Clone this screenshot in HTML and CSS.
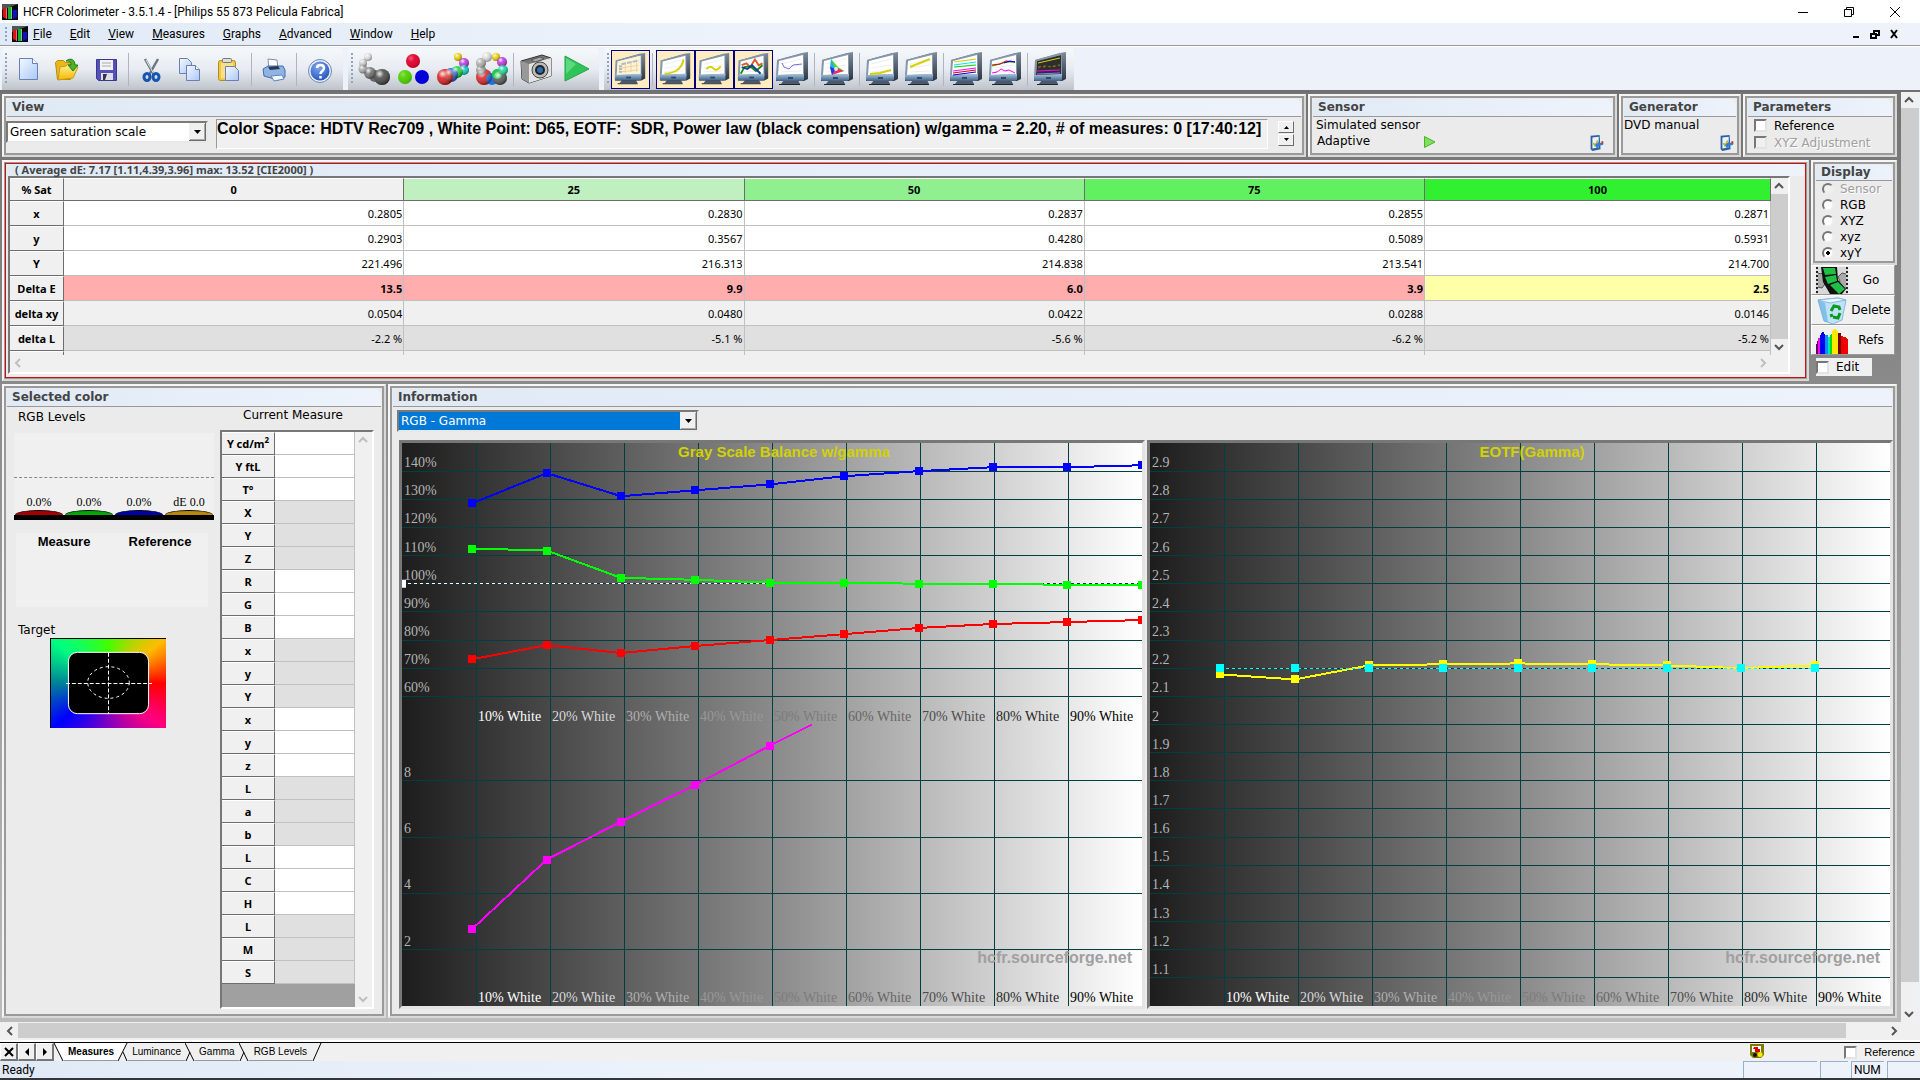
FILE: index.html
```html
<!doctype html>
<html lang="en">

<head>
  <meta charset="utf-8">
  <title>HCFR Colorimeter - 3.5.1.4 - [Philips 55 873 Pelicula Fabrica]</title>
  <link rel="stylesheet" href="styles.css">
</head>

<body>
  <!-- shared icon shapes -->
  <svg class="defs" aria-hidden="true">
    <defs>
      <linearGradient id="g-blue" x1="0" y1="0" x2="1" y2="1">
        <stop offset="0" stop-color="#f4f8ff" />
        <stop offset="1" stop-color="#a9c8f8" />
      </linearGradient>
      <linearGradient id="g-bezel" x1="0" y1="0" x2="0" y2="1">
        <stop offset="0" stop-color="#a9c3dc" />
        <stop offset="1" stop-color="#3f6288" />
      </linearGradient>
      <linearGradient id="g-side" x1="0" y1="0" x2="0" y2="1">
        <stop offset="0" stop-color="#7f8c9b" />
        <stop offset="1" stop-color="#2a3440" />
      </linearGradient>
      <linearGradient id="g-fold" x1="0" y1="0" x2="0" y2="1">
        <stop offset="0" stop-color="#fff49a" />
        <stop offset="1" stop-color="#f5b800" />
      </linearGradient>
      <radialGradient id="g-help" cx=".4" cy=".3" r=".8">
        <stop offset="0" stop-color="#7ea8ee" />
        <stop offset="1" stop-color="#1d4cb8" />
      </radialGradient>
      <radialGradient id="g-shine" cx=".35" cy=".3" r=".7">
        <stop offset="0" stop-color="#fff" stop-opacity=".9" />
        <stop offset=".4" stop-color="#fff" stop-opacity=".15" />
        <stop offset="1" stop-color="#000" stop-opacity=".35" />
      </radialGradient>
      <symbol id="logo" viewBox="0 0 16 16">
        <rect width="16" height="16" fill="#0a0a0a" />
        <path d="M0 0h16L0 6z" fill="#555" />
        <path d="M1 4h4v11l-4-2z" fill="#e01010" />
        <path d="M6 3h4v12H6z" fill="#10b030" />
        <path d="M11 6h4v7l-4 2z" fill="#1010d0" />
        <path d="M4 4h1v11H4zM9 3h1v12H9z" fill="#fff" opacity=".4" />
      </symbol>
      <symbol id="monitor" viewBox="0 0 39 39">
        <path d="M11 30h14l2 4H8z" fill="#4d5968" />
        <path d="M6 34h21v1H6z" fill="#20262e" />
        <path d="M4 10l25-7 6-1v27l-4 2H3l1-6z" fill="url(#g-side)" />
        <path d="M4 10l26-7 1 1v22H3z" fill="#8497ab" />
        <path d="M6 11l24-6v19L5 25z" fill="#fff" />
        <path d="M3 25l28-1v6l-2 1H4l-1-1z" fill="url(#g-bezel)" />
        <path d="M15 27h5v2h-5z" fill="#2f4b6b" />
        <path d="M8 14l20-5M8 18l20-3M8 22l20-1" stroke="#eee" fill="none" />
      </symbol>
      <symbol id="tool" viewBox="0 0 18 20">
        <path d="M3 2l10-1 1 16-9 2-2-2z" fill="#2d5f9c" />
        <path d="M5 4l7-1v12l-7 1z" fill="#eaf4ff" />
        <path d="M6 10l2 3 3-6" stroke="#c4b33a" stroke-width="2" fill="none" />
        <path d="M8 12l4-3 2 1 3-1v3l-4 1-3 3z" fill="#2d80d8" />
        <path d="M15 8h2v3h-2z" fill="#c23b2e" />
      </symbol>
      <symbol id="drop" viewBox="0 0 17 18">
        <path d="M0 0h17v18H0z" fill="#f0f0f0" />
        <path d="M0 18h17V0h-1v17H0z" fill="#6d6d6d" />
        <path d="M1 16h14V1h1v16H1z" fill="#a8a8a8" />
        <path d="M5 7h7l-3.500 4z" fill="#000" />
      </symbol>
    </defs>
  </svg>

  <header class="titlebar">
    <svg class="logo"><use href="#logo" /></svg>
    <span>HCFR Colorimeter - 3.5.1.4 - [Philips 55 873 Pelicula Fabrica]</span>
    <div class="winbtns">
      <button aria-label="Minimize"><svg viewBox="0 0 12 12"><path d="M1 6.500h10" /></svg></button>
      <button aria-label="Restore"><svg viewBox="0 0 12 12"><path d="M1.500 3.500h7v7h-7zM3.500 3V1.500h7v7H9" /></svg></button>
      <button aria-label="Close"><svg viewBox="0 0 12 12"><path d="M1 1l10 10M11 1L1 11" /></svg></button>
    </div>
  </header>

  <nav class="menubar">
    <i class="grip"></i>
    <svg class="logo"><use href="#logo" /></svg>
    <a href="#"><u>F</u>ile</a>
    <a href="#"><u>E</u>dit</a>
    <a href="#"><u>V</u>iew</a>
    <a href="#"><u>M</u>easures</a>
    <a href="#"><u>G</u>raphs</a>
    <a href="#"><u>A</u>dvanced</a>
    <a href="#"><u>W</u>indow</a>
    <a href="#"><u>H</u>elp</a>
    <div class="winbtns docbtns">
      <button aria-label="Minimize document"><svg viewBox="0 0 10 10"><path d="M2 8h6" /></svg></button>
      <button aria-label="Restore document"><svg viewBox="0 0 10 10"><path d="M1 5h5v4H1zM4 4V2h5v4H7" /></svg></button>
      <button aria-label="Close document"><svg viewBox="0 0 10 10"><path d="M2 1l6 8M8 1L2 9" /></svg></button>
    </div>
  </nav>

  <div class="toolbar">
    <div class="group">
      <i class="grip"></i>
      <button aria-label="New"><svg viewBox="0 0 39 39"><path d="M10.500 8.500h13l5 5v16h-18z" fill="url(#g-blue)" stroke="#6a7fb5" /><path d="M23.500 8.500v5h5" fill="#fff" stroke="#6a7fb5" /></svg></button>
      <button aria-label="Open"><svg viewBox="0 0 39 39"><path d="M7.500 12.500l2-2h6l2 2h9v4l-4 13h-13z" fill="#e9b91c" stroke="#b78a10" /><path d="M12 17l6-1 2-2 10 3-5 11-15 2z" fill="url(#g-fold)" stroke="#c99a12" /><path d="M18 11c5-4 9-1 9 4h3l-5 6-5-6h3c0-3-1-4-5-4z" fill="#47b52e" stroke="#1f7d17" /></svg></button>
      <button aria-label="Save"><svg viewBox="0 0 39 39"><path d="M9.500 9.500h20v21h-18l-2-2z" fill="#5450b5" stroke="#3b3890" /><path d="M13 10h13v10H13z" fill="#f3f3f3" /><path d="M15 13h9M15 16h9" stroke="#aaa" /><path d="M14 23h12v7H14z" fill="#dde" /><path d="M16 24h4l-2 6h-2z" fill="#334" /></svg></button>
      <i class="sep"></i>
      <button aria-label="Cut"><svg viewBox="0 0 39 39"><path d="M13 9l9 16M26 9l-9 16" stroke="#6b7685" stroke-width="2.500" /><path d="M14 10l8 14" stroke="#dfe5ec" /><g fill="none" stroke="#1455b0" stroke-width="3"><ellipse cx="15" cy="27" rx="3" ry="3.500" /><ellipse cx="24" cy="27" rx="3" ry="3.500" /></g></svg></button>
      <button aria-label="Copy"><svg viewBox="0 0 39 39"><g fill="url(#g-blue)" stroke="#6a7fb5"><path d="M8.500 8.500h8l4 4v11h-12z" /><path d="M15.500 15.500h9l4 4v11h-13z" /><path d="M24.500 15.500v4h4" fill="#fff" /></g></svg></button>
      <button aria-label="Paste"><svg viewBox="0 0 39 39"><rect x="8.500" y="10.500" width="17" height="20" rx="2" fill="#f1c840" stroke="#b48a1c" /><path d="M11 13h12v15H11z" fill="#f8e08a" /><rect x="12.500" y="8.500" width="9" height="4" rx="1" fill="#ddd" stroke="#777" /><path d="M15.500 16.500h9l4 4v10h-13z" fill="url(#g-blue)" stroke="#6a7fb5" /></svg></button>
      <i class="sep"></i>
      <button aria-label="Print"><svg viewBox="0 0 39 39"><path d="M13 9l9 1 1 9-9 1z" fill="#fff" stroke="#7c8fb0" /><path d="M8 19l5-3h15l2 4v7l-7 3-14-4z" fill="#8fb3e3" stroke="#456aa5" /><path d="M13 17l10-1 2 3-10 1z" fill="#2b3a52" /><path d="M16 26l11-1 2 4-10 2z" fill="#f5faff" stroke="#5b86c5" /></svg></button>
      <i class="sep"></i>
      <button aria-label="Help"><svg viewBox="0 0 39 39"><circle cx="20" cy="21" r="11.500" fill="#e8eefa" stroke="#6c86b8" /><circle cx="20" cy="21" r="9.500" fill="url(#g-help)" /><path d="M17 18c0-4 7-4 7 0 0 3-3.500 3-3.500 6M20.500 26v2.500" stroke="#fff" stroke-width="2.500" fill="none" /></svg></button>
    </div>

    <div class="group">
      <i class="grip"></i>
      <button aria-label="Grayscale"><svg viewBox="0 0 39 39"><g fill="#ddd"><circle cx="13" cy="7" r="4" /><circle cx="8" cy="13" r="4" fill="#ccc" /><circle cx="8" cy="19" r="4.500" fill="#aaa" /><circle cx="15" cy="23" r="6" fill="#777" /><circle cx="20" cy="26" r="6" fill="#666" /><circle cx="27" cy="27" r="8" fill="#444" /></g><g fill="url(#g-shine)"><circle cx="13" cy="7" r="4" /><circle cx="8" cy="13" r="4" /><circle cx="8" cy="19" r="4.500" /><circle cx="15" cy="23" r="6" /><circle cx="27" cy="27" r="8" /></g></svg></button>
      <button aria-label="Primaries"><svg viewBox="0 0 39 39"><circle cx="19" cy="11" r="7" fill="#e0002c" /><circle cx="11" cy="27" r="7" fill="#4ed000" /><circle cx="28" cy="27" r="7" fill="#0000d8" /><g fill="url(#g-shine)" opacity=".4"><circle cx="19" cy="11" r="7" /><circle cx="11" cy="27" r="7" /></g></svg></button>
      <button aria-label="Primaries and secondaries"><svg viewBox="0 0 39 39"><circle cx="25" cy="7" r="4" fill="#ead000" /><circle cx="31" cy="13" r="5" fill="#c030e0" /><circle cx="31" cy="20" r="5" fill="#10c8c8" /><circle cx="24" cy="22" r="6" fill="#10d030" /><circle cx="18" cy="25" r="7" fill="#2060d0" /><circle cx="12" cy="27" r="8" fill="#d81818" /><g fill="url(#g-shine)"><circle cx="25" cy="7" r="4" /><circle cx="31" cy="13" r="5" /><circle cx="31" cy="20" r="5" /><circle cx="24" cy="22" r="6" /><circle cx="18" cy="25" r="7" /><circle cx="12" cy="27" r="8" /></g></svg></button>
      <button aria-label="Saturation sweeps"><svg viewBox="0 0 39 39"><circle cx="12" cy="27" r="8" fill="#d82020" /><circle cx="20" cy="29" r="6" fill="#2070d8" /><circle cx="28" cy="28" r="7" fill="#555" /><circle cx="9" cy="20" r="5" fill="#999" /><circle cx="9" cy="13" r="5" fill="#aaa" /><circle cx="15" cy="7" r="5" fill="#ddd" /><circle cx="24" cy="7" r="4" fill="#ead000" /><circle cx="30" cy="12" r="5" fill="#c030e0" /><circle cx="31" cy="20" r="5" fill="#10d8a0" /><circle cx="25" cy="24" r="5" fill="#20c850" /><g fill="url(#g-shine)"><circle cx="12" cy="27" r="8" /><circle cx="28" cy="28" r="7" /><circle cx="9" cy="20" r="5" /><circle cx="9" cy="13" r="5" /><circle cx="15" cy="7" r="5" /><circle cx="24" cy="7" r="4" /><circle cx="30" cy="12" r="5" /><circle cx="31" cy="20" r="5" /></g></svg></button>
      <i class="sep"></i>
      <button aria-label="Continuous measures"><svg viewBox="0 0 39 39"><path d="M4 11l21-6 9 3v18L12 33l-7-4z" fill="#777" stroke="#333" /><path d="M4 11l8 3v19l-7-4z" fill="#999" /><path d="M12 14l22-6v18l-22 7z" fill="#e4e4e2" /><path d="M14 10l9-3 4 2-9 3z" fill="#aaa" stroke="#555" /><circle cx="23" cy="20" r="8" fill="#bbb" stroke="#444" /><circle cx="23" cy="20" r="5" fill="#222" /><circle cx="23" cy="20" r="3" fill="#2a6db5" /></svg></button>
      <button aria-label="Start measures"><svg viewBox="0 0 39 39"><path d="M9 6l24 13L9 31z" fill="#2fc45a" stroke="#22a546" /><path d="M10 8l10 6-10 10z" fill="#7fe89a" opacity=".6" /></svg></button>
    </div>

    <div class="group">
      <i class="grip"></i>
      <button class="on" aria-label="Measures view"><svg viewBox="0 0 39 39"><use href="#monitor" /><path d="M6 11l24-6v19L5 25z" fill="#fdf3d8" /><path d="M10 14l18-4" stroke="#bbb" stroke-width="2" stroke-dasharray="5 1" /><path d="M8 16v7M14 14v9M20 13v9M26 12v10M9 18l19-3M9 22l19-2" stroke="#f0cf95" fill="none" /><path d="M9 15v8" stroke="#b5b5b5" stroke-width="3" stroke-dasharray="2 1" /></svg></button>
      <i class="sep"></i>
      <button class="on" aria-label="Luminance"><svg viewBox="0 0 39 39"><use href="#monitor" /><path d="M8 24c10-1 18-4 20-15" class="ln" stroke="#d8d000" /></svg></button>
      <button class="on" aria-label="Gamma"><svg viewBox="0 0 39 39"><use href="#monitor" /><path d="M11 19c4-4 6-2 8 0s5 0 7-3" class="ln" stroke="#d8d000" /></svg></button>
      <button class="on" aria-label="RGB levels"><svg viewBox="0 0 39 39"><use href="#monitor" /><path d="M7 15l5-2 4 4 5-8 4 6 4-2" class="ln" stroke="#e05a28" /><path d="M6 24l4-7 6-1 6 5 7-6" class="ln" stroke="#169016" /><path d="M7 17l6 2 5-4 9 9" class="ln" stroke="#143c98" /></svg></button>
      <button aria-label="Color temperature"><svg viewBox="0 0 39 39"><use href="#monitor" /><path d="M9 13l2 4 5 2 4-4 9-1" class="ln thin" stroke="#7070e0" /></svg></button>
      <i class="sep"></i>
      <button aria-label="CIE chart"><svg viewBox="0 0 39 39"><use href="#monitor" /><path d="M13 9l-1 8 2 8 6-7z" fill="#20b0e0" /><path d="M13 9l7 8 6 4-7 1z" fill="#50e020" /><path d="M26 21l-12 4 5-7z" fill="#e83060" /><path d="M14 25l-2-8 6 2z" fill="#3030e0" /><circle cx="18" cy="19" r="2" fill="#fff" opacity=".8" /></svg></button>
      <i class="sep"></i>
      <button aria-label="Near black"><svg viewBox="0 0 39 39"><use href="#monitor" /><path d="M7 24l10-1 11-3" class="ln" stroke="#d8d000" /></svg></button>
      <button aria-label="Near white"><svg viewBox="0 0 39 39"><use href="#monitor" /><path d="M8 17l20-8" class="ln" stroke="#d8d000" /></svg></button>
      <i class="sep"></i>
      <button aria-label="Saturation luminance"><svg viewBox="0 0 39 39"><use href="#monitor" /><g class="ln thin"><path d="M7 12l22-3" stroke="#d8d000" /><path d="M7 15l22-3" stroke="#00e8f0" /><path d="M7 17l22-2" stroke="#00d800" /><path d="M6 21l23-3" stroke="#f0f" /><path d="M6 23l23-3" stroke="#e00000" /><path d="M6 25l23-3" stroke="#0000e0" /></g></svg></button>
      <button aria-label="Saturation shift"><svg viewBox="0 0 39 39"><use href="#monitor" /><g class="ln thin"><path d="M6 16l8-2 6-2 9 0" stroke="#00b000" /><path d="M6 15l8-1 6-3 9 1" stroke="#e00000" /><path d="M18 13l6-2 5 1" stroke="#0000e0" /><path d="M6 23l5-1 4-3 4 2 4-1 6 3" stroke="#f0f" /></g></svg></button>
      <i class="sep"></i>
      <button aria-label="Measures combined"><svg viewBox="0 0 39 39"><use href="#monitor" /><path d="M6 11l24-6v19L5 25z" fill="#2e2e2e" /><g class="ln thin"><path d="M7 13l22-5" stroke="#d8d000" /><path d="M7 17l8-1 6 1 8-2" stroke="#e05a28" stroke-dasharray="3 2" /><path d="M7 18l22-3" stroke="#169016" stroke-dasharray="2 3" /><path d="M6 21l23-1" stroke="#f0f" /><path d="M6 24l23-1" stroke="#8080ff" /></g></svg></button>
    </div>
  </div>

  <div class="workspace">
    <main>
      <div class="row">
        <section class="pane view-pane">
          <h2>View</h2>
          <div class="view-body">
            <div class="select">
              <select aria-label="View"><option>Green saturation scale</option></select>
              <svg><use href="#drop" /></svg>
            </div>
            <output>Color Space: HDTV Rec709 , White Point: D65, EOTF:&nbsp; SDR, Power law (black compensation) w/gamma = 2.20, # of measures: 0 [17:40:12]</output>
            <div class="spin">
              <button aria-label="Up"><svg viewBox="0 0 7 4"><path d="M1 4l2.500-3L6 4z" /></svg></button>
              <button aria-label="Down"><svg viewBox="0 0 7 4"><path d="M1 0l2.500 3L6 0z" /></svg></button>
            </div>
          </div>
        </section>
        <section class="pane sensor-pane">
          <h2>Sensor</h2>
          <p>Simulated sensor</p>
          <div class="line">
            <span>Adaptive</span>
            <svg class="play" viewBox="0 0 12 12"><path d="M.5.5L11 6 .5 11.500z" fill="#7fe05a" stroke="#4cae2c" /></svg>
            <button class="conf" aria-label="Configure sensor"><svg><use href="#tool" /></svg></button>
          </div>
        </section>
        <section class="pane gen-pane">
          <h2>Generator</h2>
          <p>DVD manual</p>
          <div class="line">
            <button class="conf" aria-label="Configure generator"><svg><use href="#tool" /></svg></button>
          </div>
        </section>
        <section class="pane param-pane">
          <h2>Parameters</h2>
          <label><input type="checkbox">Reference</label>
          <label class="off"><input type="checkbox" disabled>XYZ Adjustment</label>
        </section>
      </div>

      <div class="row">
        <section class="pane data-pane">
          <h2>( Average dE: 7.17 [1.11,4.39,3.96] max: 13.52 [CIE2000] )</h2>
          <div class="grid-box">
            <div class="grid-main">
              <table class="data">
                <thead>
                  <tr><th>% Sat</th><th>0</th><th class="s25">25</th><th class="s50">50</th><th class="s75">75</th><th class="s100">100</th></tr>
                </thead>
                <tbody>
                  <tr><th>x</th><td>0.2805</td><td>0.2830</td><td>0.2837</td><td>0.2855</td><td>0.2871</td></tr>
                  <tr><th>y</th><td>0.2903</td><td>0.3567</td><td>0.4280</td><td>0.5089</td><td>0.5931</td></tr>
                  <tr><th>Y</th><td>221.496</td><td>216.313</td><td>214.838</td><td>213.541</td><td>214.700</td></tr>
                  <tr class="de"><th>Delta E</th><td>13.5</td><td>9.9</td><td>6.0</td><td>3.9</td><td class="ok">2.5</td></tr>
                  <tr class="dxy"><th>delta xy</th><td>0.0504</td><td>0.0480</td><td>0.0422</td><td>0.0288</td><td>0.0146</td></tr>
                  <tr class="dl"><th>delta L</th><td>-2.2 %</td><td>-5.1 %</td><td>-5.6 %</td><td>-6.2 %</td><td>-5.2 %</td></tr>
                  <tr class="cut"><th></th><td></td><td></td><td></td><td></td><td></td></tr>
                </tbody>
              </table>
              <div class="vbar">
                <svg viewBox="0 0 16 16"><path d="M4 10l4-4 4 4" /></svg>
                <i></i>
                <svg viewBox="0 0 16 16"><path d="M4 6l4 4 4-4" /></svg>
              </div>
            </div>
            <div class="hbar idle">
              <svg viewBox="0 0 16 16"><path d="M10 4L6 8l4 4" /></svg>
              <svg viewBox="0 0 16 16"><path d="M6 4l4 4-4 4" /></svg>
            </div>
          </div>
        </section>

        <aside class="side">
          <section class="pane display-pane">
            <h2>Display</h2>
            <label class="off"><input type="radio" name="display" disabled>Sensor</label>
            <label><input type="radio" name="display">RGB</label>
            <label><input type="radio" name="display">XYZ</label>
            <label><input type="radio" name="display">xyz</label>
            <label><input type="radio" name="display" checked>xyY</label>
          </section>
          <button class="act">
            <svg viewBox="0 0 32 27"><path d="M0 0h32v27H0z" fill="#d8d8d8" /><path d="M1 0v27M31 0v27" stroke="#222" stroke-width="2" stroke-dasharray="2 2" /><path d="M2 6l3 1 3-3 3 4-3 4 1 5-3 4-4-1M30 7l-4-1-4 4 2 4-2 4 4 4 4-1" fill="#aaa" stroke="#555" /><path d="M5 0h16l1 13 8 9-4 5H14L7 15z" fill="#111" /><path d="M7 1h12l1 6-11 1zM9 10l11-2 1 6-9 3zM14 18l8-3 7 7-6 5z" fill="#20c048" /></svg>
            <span>Go</span>
          </button>
          <button class="act">
            <svg viewBox="0 0 32 27"><path d="M2 3l20-2 8 2-4 20-9 4-9-3z" fill="#bfe2f8" stroke="#88b8dc" /><path d="M2 3l12 3 16-3-8-2z" fill="#eaf7ff" stroke="#88b8dc" /><path d="M2 3l6 21 4 1L9 6z" fill="#5aa8e0" opacity=".6" /><path d="M15 14l3-5 5 1 1 3M24 16l-2 5-5-1M15 17l1 3" stroke="#0a9a20" stroke-width="3" fill="none" /></svg>
            <span>Delete</span>
          </button>
          <button class="act">
            <svg viewBox="0 0 32 27" shape-rendering="crispEdges"><path d="M0 18l2-5v14H0z" fill="#600060" /><path d="M2 11h2v16H2z" fill="#f0f" /><path d="M4 9l3-5 2 4v19H4z" fill="#0000f0" /><path d="M9 8h3v19H9z" fill="#0090ff" /><path d="M12 10h2v17h-2z" fill="#00e8c0" /><path d="M14 8l2-2v21h-2z" fill="#0d0" /><path d="M16 4l3-2 3 3v22h-6z" fill="#ffe800" /><path d="M22 6h3v21h-3z" fill="#700" /><path d="M25 9l4 1 3 2v15h-7z" fill="#f00000" /></svg>
            <span>Refs</span>
          </button>
          <label class="edit"><input type="checkbox">Edit</label>
        </aside>
      </div>

      <div class="row grow">
        <section class="pane color-pane">
          <h2>Selected color</h2>
          <div class="color-body">
            <div class="levels-col">
              <p class="cap">RGB Levels</p>
              <div class="levels">
                <div class="ref-line"></div>
                <div class="bars">
                  <div><span>0.0%</span><i class="r"></i></div>
                  <div><span>0.0%</span><i class="g"></i></div>
                  <div><span>0.0%</span><i class="b"></i></div>
                  <div><span>dE 0.0</span><i class="e"></i></div>
                </div>
              </div>
              <div class="compare"><b>Measure</b><b>Reference</b></div>
              <p class="cap target-cap">Target</p>
              <div class="target">
                <svg viewBox="0 0 116 90">
                  <rect x="17.500" y="13.500" width="81" height="62" rx="9" fill="#000" stroke="#fff" />
                  <path d="M58 14v62M15 45h87" stroke="#fff" stroke-dasharray="4 2" />
                  <ellipse cx="58" cy="44" rx="21" ry="16" fill="none" stroke="#fff" stroke-dasharray="3 3" />
                </svg>
              </div>
            </div>
            <div class="measure-col">
              <p class="cap">Current Measure</p>
              <div class="measure-box">
                <table class="measure">
                  <tbody>
                    <tr><th>Y cd/m<sup>2</sup></th><td></td></tr>
                    <tr><th>Y ftL</th><td></td></tr>
                    <tr><th>T°</th><td></td></tr>
                    <tr class="alt"><th>X</th><td></td></tr>
                    <tr class="alt"><th>Y</th><td></td></tr>
                    <tr class="alt"><th>Z</th><td></td></tr>
                    <tr><th>R</th><td></td></tr>
                    <tr><th>G</th><td></td></tr>
                    <tr><th>B</th><td></td></tr>
                    <tr class="alt"><th>x</th><td></td></tr>
                    <tr class="alt"><th>y</th><td></td></tr>
                    <tr class="alt"><th>Y</th><td></td></tr>
                    <tr><th>x</th><td></td></tr>
                    <tr><th>y</th><td></td></tr>
                    <tr><th>z</th><td></td></tr>
                    <tr class="alt"><th>L</th><td></td></tr>
                    <tr class="alt"><th>a</th><td></td></tr>
                    <tr class="alt"><th>b</th><td></td></tr>
                    <tr><th>L</th><td></td></tr>
                    <tr><th>C</th><td></td></tr>
                    <tr><th>H</th><td></td></tr>
                    <tr class="alt"><th>L</th><td></td></tr>
                    <tr class="alt"><th>M</th><td></td></tr>
                    <tr class="alt"><th>S</th><td></td></tr>
                  </tbody>
                </table>
                <div class="vbar idle">
                  <svg viewBox="0 0 16 16"><path d="M4 10l4-4 4 4" /></svg>
                  <svg viewBox="0 0 16 16"><path d="M4 6l4 4 4-4" /></svg>
                </div>
              </div>
            </div>
          </div>
        </section>

        <section class="pane info-pane">
          <h2>Information</h2>
          <div class="select info-select">
            <select aria-label="Information"><option>RGB - Gamma</option></select>
            <svg><use href="#drop" /></svg>
          </div>
          <div class="charts">
            <div class="chart"><svg id="rgb-chart" role="img" aria-label="Gray Scale Balance w/gamma"></svg></div>
            <div class="chart"><svg id="gamma-chart" role="img" aria-label="EOTF(Gamma)"></svg></div>
          </div>
        </section>
      </div>
    </main>
    <div class="vbar page-v">
      <svg viewBox="0 0 16 16"><path d="M4 10l4-4 4 4" /></svg>
      <i></i>
      <svg viewBox="0 0 16 16"><path d="M4 6l4 4 4-4" /></svg>
    </div>
  </div>

  <div class="hbar page-h">
    <svg viewBox="0 0 16 16"><path d="M10 4L6 8l4 4" /></svg>
    <i></i>
    <svg viewBox="0 0 16 16"><path d="M6 4l4 4-4 4" /></svg>
  </div>

  <div class="tabs">
    <button class="step" aria-label="Close view"><svg viewBox="0 0 10 10"><path d="M1 1l8 8M9 1L1 9" stroke="#000" stroke-width="2" /></svg></button>
    <button class="step" aria-label="Previous"><svg viewBox="0 0 10 10"><path d="M7 1v8L3 5z" /></svg></button>
    <button class="step" aria-label="Next"><svg viewBox="0 0 10 10"><path d="M3 1v8l4-4z" /></svg></button>
    <svg class="edge" viewBox="0 0 10 18"><path d="M0 0h10v18z" fill="#fff" /><path d="M0 0l9 18" /></svg>
    <button class="tab active">Measures</button>
    <svg class="edge" viewBox="0 0 10 18"><path d="M0 0h9L0 18z" fill="#fff" /><path d="M9 0L0 18M5 9l4 9" /></svg>
    <button class="tab">Luminance</button>
    <svg class="edge" viewBox="0 0 10 18"><path d="M0 0l9 18M5 9L1 18" /></svg>
    <button class="tab">Gamma</button>
    <svg class="edge" viewBox="0 0 10 18"><path d="M0 0l9 18M5 9L1 18" /></svg>
    <button class="tab last">RGB Levels</button>
    <svg class="edge" viewBox="0 0 10 18"><path d="M9 0L1 18" /></svg>
    <svg class="mark" viewBox="0 0 14 14"><path d="M0 0h14v11l-3 3H3l-3-3z" fill="#7d7d00" /><path d="M2 2h9v6H2z" fill="#fff" /><path d="M4 3h4v2h2v3H5V5H3z" fill="#e00000" /><circle cx="5" cy="11" r="2" fill="#111" /><circle cx="10" cy="10.500" r="2.500" fill="#ffe800" /></svg>
    <label><input type="checkbox">Reference</label>
  </div>

  <footer class="status">
    <span class="ready">Ready</span>
    <span class="cell wide"></span>
    <span class="cell short"></span>
    <span class="cell">NUM</span>
    <span class="cell"></span>
  </footer>

  <script src="charts.js"></script>
</body>

</html>
```

FILE: styles.css
```css
* {
  box-sizing: border-box;
}

html,
body {
  margin: 0;
  height: 100%;
}

body {
  display: flex;
  flex-direction: column;
  background: #edf2fa;
  border-bottom: 2px solid #33363b;
  font-family: "DejaVu Sans", Verdana, sans-serif;
  font-size: 12px;
  color: #000;
  overflow: hidden;
}

button,
select,
input {
  font: inherit;
  margin: 0;
  padding: 0;
}

button {
  border: none;
  background: none;
  cursor: pointer;
}

p,
h2 {
  margin: 0;
}

svg {
  display: block;
}

.defs {
  position: absolute;
  width: 0;
  height: 0;
}

/* title and menu */

.titlebar {
  display: flex;
  align-items: center;
  gap: 5px;
  height: 23px;
  padding-left: 2px;
  background: #fff;
  font: 12px Roboto, "Noto Sans", sans-serif;
}

.logo {
  width: 16px;
  height: 16px;
}

.winbtns {
  display: flex;
  margin-left: auto;
  padding-right: 2px;
}

.winbtns button {
  width: 46px;
  display: flex;
  justify-content: center;
}

.winbtns svg {
  width: 12px;
  height: 12px;
  fill: none;
  stroke: #000;
}

.menubar {
  display: flex;
  align-items: center;
  height: 23px;
  padding-left: 5px;
  background: linear-gradient(90deg, #e0eaf6, #eef3fb 40%);
  border-bottom: 1px solid #999;
  font: 12px Roboto, "Noto Sans", sans-serif;
}

.menubar .logo {
  margin-left: 5px;
  margin-right: -4px;
}

.menubar a {
  color: #000;
  text-decoration: none;
  padding: 0 9px;
}

.docbtns button {
  width: 19px;
}

.docbtns {
  padding-right: 17px;
}

.docbtns svg {
  width: 10px;
  height: 10px;
  stroke-width: 2;
}

.grip {
  width: 2px;
  height: 14px;
  background: repeating-linear-gradient(#8fa3c4 0 2px, transparent 2px 4px);
}

.toolbar {
  display: flex;
  gap: 5px;
  height: 44px;
  padding: 1px 2px 0;
  border-top: 1px solid #fff;
}

.group {
  display: flex;
  align-items: center;
  padding: 0 4px 0 3px;
  border-radius: 4px 4px 0 0;
  background: linear-gradient(#f5f8fb, #e8ecf2 50%, #bfc4cc);
}

.group .grip {
  height: 32px;
  margin-right: 2px;
}

.group button {
  width: 39px;
  height: 39px;
}

.group button svg {
  width: 100%;
  height: 100%;
}

.group .on {
  background: #ffecc0;
  border: 1px solid #000080;
}

.sep {
  width: 1px;
  height: 33px;
  margin: 0 3px 0 2px;
  background: #b0b5bd;
}

.ln {
  fill: none;
  stroke-width: 2;
}

.thin {
  stroke-width: 1;
}

/* panes */

.workspace {
  flex: 1;
  min-height: 0;
  display: flex;
  border-top: 2px solid #6f6f6f;
}

main {
  flex: 1;
  min-width: 0;
  display: flex;
  flex-direction: column;
  gap: 3px;
  padding: 2px 4px 4px 2px;
  background: linear-gradient(#737373, #bcbcbc);
}

.row {
  display: flex;
  gap: 2px;
}

.grow {
  flex: 1;
  min-height: 0;
}

.pane {
  border: 2px solid #f6f6f6;
  border-right-color: #d8d8d8;
  border-bottom-color: #d8d8d8;
  padding: 2px;
  background: #ebebeb;
  box-shadow: inset 0 0 0 2px #9a9a9a;
}

.pane h2 {
  height: 18px;
  margin: 1px 1px 0;
  padding-left: 5px;
  border-bottom: 1px solid #999;
  border-radius: 6px 6px 0 0;
  background: linear-gradient(90deg, #e0eaf5, #eef3fb);
  color: #444;
  font-size: 12px;
  line-height: 17px;
}

.view-pane {
  flex: 1;
}

.view-body {
  display: flex;
  height: 36px;
  padding: 4px 8px 4px 0;
}

.select {
  position: relative;
  width: 202px;
  height: 22px;
  border: 2px solid;
  border-color: #7a7a7a #e8e8e8 #e8e8e8 #7a7a7a;
}

.select select {
  appearance: none;
  width: 100%;
  height: 18px;
  padding-left: 2px;
  border: none;
  border-radius: 0;
  background: #fff;
  color: #000;
}

.select svg {
  position: absolute;
  top: 0;
  right: 0;
  width: 17px;
  height: 18px;
  pointer-events: none;
}

.view-body output {
  flex: 1;
  margin: -2px 10px 0 8px;
  border: 1px solid;
  border-color: #999 #fff #fff #999;
  background: #f0f0f0;
  font: bold 16px/18px "Liberation Sans", Arial, sans-serif;
  white-space: nowrap;
}

.spin {
  display: flex;
  flex-direction: column;
  gap: 1px;
}

.spin button,
.step {
  border: 1px solid;
  border-color: #fff #6d6d6d #6d6d6d #fff;
  background: #f0f0f0;
}

.spin button {
  width: 16px;
  height: 12px;
  display: flex;
  align-items: center;
  justify-content: center;
}

.spin svg {
  width: 7px;
  height: 4px;
}

.sensor-pane {
  width: 309px;
}

.gen-pane {
  width: 122px;
}

.param-pane {
  width: 154px;
}

.sensor-pane p,
.gen-pane p {
  padding-left: 4px;
  line-height: 17px;
}

.gen-pane p {
  padding-left: 1px;
}

.line {
  display: flex;
  align-items: flex-start;
  height: 19px;
  padding: 0 8px 0 5px;
}

.gen-pane .line {
  padding-right: 2px;
}

.play {
  width: 12px;
  height: 12px;
  margin: 2px 0 0 54px;
}

.conf {
  margin-left: auto;
}

.conf svg {
  width: 18px;
  height: 18px;
}

label {
  display: flex;
  align-items: center;
}

.off {
  color: #a0a0a0;
  text-shadow: 1px 1px #fff;
}

.param-pane label {
  height: 17px;
  gap: 7px;
  padding-left: 7px;
}

input[type=checkbox] {
  appearance: none;
  width: 13px;
  height: 13px;
  border: 2px solid;
  border-color: #777 #e3e3e3 #e3e3e3 #777;
  background: #fff;
}

input[type=checkbox]:disabled {
  background: #f0f0f0;
}

input[type=radio] {
  appearance: none;
  width: 12px;
  height: 12px;
  border: 2px solid;
  border-color: #777 #eee #eee #777;
  border-radius: 50%;
  background: #fff;
}

input[type=radio]:disabled {
  background: #f0f0f0;
}

input[type=radio]:checked {
  background: radial-gradient(#000 0 2px, #fff 2px);
}

/* measures grid */

.data-pane {
  flex: 1;
  padding-bottom: 5px;
  box-shadow: inset 0 0 0 1px #9a9a9a, inset 0 0 0 2px #d01010;
}

.data-pane h2 {
  height: auto;
  margin-top: 0;
  padding-left: 8px;
  border: none;
  font: bold 11px/12px "Noto Sans", "Open Sans", sans-serif;
}

.grid-box {
  margin: 0 15px 0 2px;
  border: 2px solid;
  border-color: #777 #fff #fff #777;
  background: #f0f0f0;
}

.grid-main {
  display: flex;
}

table {
  border-collapse: separate;
  border-spacing: 0;
  font: 11px "Noto Sans", "Open Sans", sans-serif;
}

.data {
  flex: 1;
  table-layout: fixed;
}

.data th,
.data td {
  height: 25px;
  padding: 0 1px;
}

.data thead th {
  height: 23px;
}

.data th {
  border-right: 1px solid #6d6d6d;
  border-bottom: 1px solid #6d6d6d;
  border-top: 1px solid #fff;
  background: #f0f0f0;
}

.data th:first-child {
  width: 54px;
}

.data .s100 {
  width: 346px;
}

.data td {
  border-right: 1px solid #c0c0c0;
  border-bottom: 1px solid #c0c0c0;
  background: #fff;
  text-align: right;
}

.data .s25 {
  background: #c0f0c0;
}

.data .s50 {
  background: #90f090;
}

.data .s75 {
  background: #60f060;
}

.data .s100 {
  background: #30f030;
}

.data .de td {
  background: #ffadad;
  font-weight: bold;
}

.data .de .ok {
  background: #ffffa8;
}

.data .dxy td,
.data .cut td {
  background: #f0f0f0;
}

.data .dl td {
  background: #e0e0e0;
}

.data .cut th,
.data .cut td {
  height: 4px;
  border-bottom: none;
}

/* scroll bars */

.vbar,
.hbar {
  display: flex;
  background: #f0f0f0;
}

.vbar {
  flex-direction: column;
  justify-content: space-between;
  width: 17px;
}

.hbar {
  justify-content: space-between;
  height: 17px;
}

.grid-box .hbar {
  padding-right: 17px;
}

.vbar svg,
.hbar svg {
  width: 16px;
  height: 16px;
  fill: none;
  stroke: #555;
  stroke-width: 2;
}

.idle svg {
  stroke: #bfbfbf;
}

.vbar i,
.hbar i {
  flex: 1;
  background: #cdcdcd;
}

.page-v {
  width: 18px;
  margin-right: 1px;
}

.page-v i {
  margin-bottom: 24px;
}

.page-h {
  height: 20px;
  padding: 1px 18px 2px 2px;
  border-bottom: 2px solid #fff;
}

.page-h i {
  margin-right: 40px;
}

/* display column */

.side {
  width: 86px;
}

.display-pane {
  height: 105px;
}

.display-pane h2 {
  height: 16px;
  line-height: 15px;
}

.display-pane label {
  height: 16px;
  gap: 6px;
  padding-left: 7px;
}

.act {
  display: flex;
  align-items: center;
  width: 84px;
  height: 30px;
  padding-left: 4px;
  border: 1px solid;
  border-color: #fff #999 #999 #fff;
  background: #f0f0f0;
}

.act svg {
  width: 32px;
  height: 27px;
}

.act span {
  flex: 1;
}

.edit {
  width: 56px;
  height: 18px;
  margin: 3px 0 0 5px;
  gap: 7px;
  background: #f0f0f0;
}

/* selected color */

.color-pane {
  width: 384px;
}

.color-body {
  display: flex;
  height: calc(100% - 19px);
}

.levels-col {
  flex: 1;
  padding: 2px 6px 0 8px;
}

.cap {
  padding-left: 4px;
  line-height: 16px;
}

.levels {
  display: flex;
  flex-direction: column;
  height: 87px;
  margin-top: 8px;
  background: #f0f0f0;
  border-bottom: 5px solid #000;
}

.ref-line {
  height: 45px;
  border-bottom: 1px dashed #888;
}

.bars {
  display: flex;
  flex: 1;
  align-items: flex-end;
  text-align: center;
  font: 12px "Liberation Serif", "Times New Roman", serif;
}

.bars div {
  flex: 1;
}

.bars span {
  display: block;
  line-height: 16px;
}

.bars i {
  display: block;
  height: 5px;
  margin: 0 1px;
  border-top: 1px solid #000;
  border-radius: 50% 50% 0 0 / 100% 100% 0 0;
}

.r {
  background: #a80000;
}

.g {
  background: #00a800;
}

.b {
  background: #0000a8;
}

.e {
  background: #b8860b;
}

.compare {
  display: grid;
  grid-template-columns: 1fr 1fr;
  height: 74px;
  margin: 13px 6px 0 2px;
  background: #f0f0f0;
  text-align: center;
  font: 13px/17px "Liberation Sans", Arial, sans-serif;
}

.target-cap {
  margin-top: 15px;
}

.target {
  width: 116px;
  height: 90px;
  margin-left: 36px;
  border: 1px solid #000;
  border-width: 1px 0 0 1px;
  background: conic-gradient(#40ff00, #fb0 52deg, #f00 90deg, #ff0080 128deg, #8000c0 180deg, #00f 232deg, #008098 270deg, #00ff80 308deg, #40ff00);
}

.target svg {
  width: 100%;
  height: 100%;
}

.measure-col {
  display: flex;
  flex-direction: column;
  width: 154px;
  margin: 0 8px 5px 0;
}

.measure-col .cap {
  padding: 0 8px 0 0;
  text-align: center;
}

.measure-box {
  flex: 1;
  display: flex;
  align-items: flex-start;
  margin-top: 7px;
  border: 2px solid;
  border-color: #777 #fff #fff #777;
  background: #a0a0a0;
}

.measure {
  flex: 1;
}

.measure th,
.measure td {
  height: 23px;
  padding: 0;
}

.measure th {
  width: 53px;
  border-right: 1px solid #6d6d6d;
  border-bottom: 1px solid #6d6d6d;
  border-top: 1px solid #fff;
  background: #f0f0f0;
}

.measure sup {
  font-size: 8px;
  line-height: 1px;
}

.measure td {
  border-right: 1px solid #c0c0c0;
  border-bottom: 1px solid #c0c0c0;
  background: #fff;
}

.measure .alt td {
  background: #e0e0e0;
}

.measure-box .vbar {
  align-self: stretch;
}

/* information */

.info-pane {
  flex: 1;
  min-width: 0;
  display: flex;
  flex-direction: column;
}

.info-select {
  width: 302px;
  margin: 3px 0 0 5px;
}

.info-select select {
  background: #0078d7;
  color: #fff;
}

.charts {
  flex: 1;
  min-height: 0;
  display: flex;
  gap: 2px;
  margin: 8px 0 5px 7px;
}

.chart {
  flex: 1;
  min-width: 0;
  border: 3px solid;
  border-color: #777 #e4e4e4 #e4e4e4 #777;
  background: linear-gradient(90deg, #1d1d1d, #8a8a8a 50%, #fff);
}

.chart svg {
  width: 100%;
  height: 100%;
}

.chart line {
  stroke: #004040;
  shape-rendering: crispEdges;
}

.chart .guide {
  stroke: #fff;
  stroke-dasharray: 3 3;
}

.chart .guide-cyan {
  stroke: #0ff;
  stroke-dasharray: 3 3;
}

.chart polyline {
  fill: none;
  stroke-width: 2;
  shape-rendering: crispEdges;
}

.axis {
  fill: #b4b4b4;
  font: 14px "Liberation Serif", "Times New Roman", serif;
}

.chart-title {
  fill: #d2d200;
  text-anchor: middle;
  font: bold 15px "Liberation Sans", Arial, sans-serif;
}

.site {
  fill: #a0a0a0;
  text-anchor: end;
  font: bold 16px "Liberation Sans", Arial, sans-serif;
}

/* tabs and status */

.tabs {
  display: flex;
  height: 19px;
  border-top: 1px solid #000;
  background: #f0f0f0;
}

.step {
  width: 18px;
  display: flex;
  align-items: center;
  justify-content: center;
  border-right: 2px solid #777;
  border-bottom: 2px solid #777;
}

.step svg {
  width: 10px;
  height: 10px;
}

.edge {
  width: 10px;
  height: 18px;
  fill: none;
  stroke: #000;
}

.edge path[fill] {
  stroke: none;
}

.tab {
  padding: 0 4px;
  border-bottom: 1px solid #999;
  font: 10px "Liberation Sans", Arial, sans-serif;
}

.last {
  padding: 0 5px;
}

.active {
  background: #fff;
  font-weight: bold;
}

.mark {
  width: 14px;
  height: 14px;
  margin: 1px 80px 0 auto;
}

.tabs label {
  gap: 7px;
  padding-right: 5px;
  font: 11px "Liberation Sans", Arial, sans-serif;
}

.status {
  display: flex;
  height: 17px;
  gap: 3px;
  background: linear-gradient(90deg, #e0eaf6, #eef3fb 40%);
  font: 12px/19px Roboto, "Noto Sans", sans-serif;
}

.ready {
  flex: 1;
  padding-left: 2px;
}

.cell {
  width: 33px;
  padding-left: 2px;
  border: 1px solid #98b0d0;
  border-width: 1px 0 0 1px;
  line-height: 17px;
}

.wide {
  width: 74px;
}

.short {
  width: 28px;
}
```

FILE: charts.js
```js
const NS = "http://www.w3.org/2000/svg";

function add(svg, tag, attrs, text) {
  const el = document.createElementNS(NS, tag);
  for (const key in attrs) el.setAttribute(key, attrs[key]);
  if (text) el.textContent = text;
  svg.appendChild(el);
}

function line(svg, x1, y1, x2, y2, cls) {
  add(svg, "line", { x1, y1, x2, y2, class: cls || "" });
}

// labels fade from white to black against the gray ramp
const labelColors = ["#fff", "#d8d8d8", "#b0b0b0", "#989898", "#7c7c7c", "#666", "#4c4c4c", "#282828", "#000"];

function xLabels(svg, w, y) {
  labelColors.forEach((fill, i) => {
    add(svg, "text", { x: w * (i + 1) / 10 + 2, y, class: "axis", style: "fill:" + fill }, (i + 1) * 10 + "% White");
  });
}

function columns(svg, w, h) {
  for (let i = 1; i < 10; i++) line(svg, w * i / 10, 0, w * i / 10, h);
}

function series(svg, w, toY, values, color, tail) {
  const pts = values.map((v, i) => [w * (0.095 + i * 0.1005), toY(v)]);
  const path = tail ? pts.concat([[w * tail[0], toY(tail[1])]]) : pts;
  add(svg, "polyline", { points: path.join(" "), stroke: color });
  pts.forEach(([x, y]) => {
    add(svg, "rect", { x: Math.round(x) - 4, y: Math.round(y) - 4, width: 8, height: 8, fill: color });
  });
}

function titles(svg, w, h, title) {
  add(svg, "text", { x: w / 2 + 12, y: 14, class: "chart-title" }, title);
  add(svg, "text", { x: w - 10, y: h - 43, class: "site" }, "hcfr.sourceforge.net");
}

function drawRgb() {
  const svg = document.getElementById("rgb-chart");
  const w = svg.clientWidth, h = svg.clientHeight, half = h / 2;
  const pct = v => half * (150 - v) / 100;
  const de = v => half + half * (10 - v) / 10;
  svg.replaceChildren();
  columns(svg, w, h);
  for (let v = 140; v >= 60; v -= 10) {
    line(svg, 0, pct(v), w, pct(v));
    add(svg, "text", { x: 2, y: pct(v) - 4, class: "axis" }, v + "%");
  }
  for (let v = 8; v > 0; v -= 2) {
    line(svg, 0, de(v), w, de(v));
    add(svg, "text", { x: 2, y: de(v) - 4, class: "axis" }, v);
  }
  titles(svg, w, h, "Gray Scale Balance w/gamma");
  xLabels(svg, w, half - 4);
  xLabels(svg, w, h - 4);
  line(svg, 0, pct(100), w, pct(100), "guide");
  add(svg, "rect", { x: 0, y: pct(100) - 4, width: 4, height: 8, fill: "#fff" });
  series(svg, w, pct, [128.6, 139.3, 131.1, 133.2, 135.3, 138.2, 140, 141.4, 141.4, 142.1], "#00f");
  series(svg, w, pct, [73.2, 78.2, 75.4, 77.9, 80, 82.1, 84.3, 85.7, 86.4, 87.1], "#f00");
  series(svg, w, pct, [112.5, 111.8, 102.1, 101.4, 100.4, 100.4, 100, 100, 99.6, 99.6], "#0f0");
  series(svg, w, de, [2.74, 5.2, 6.55, 7.86, 9.25], "#f0f", [0.554, 10]);
}

function drawGamma() {
  const svg = document.getElementById("gamma-chart");
  const w = svg.clientWidth, h = svg.clientHeight;
  const toY = v => h * (3 - v) / 2;
  svg.replaceChildren();
  columns(svg, w, h);
  for (let i = 29; i >= 11; i--) {
    line(svg, 0, toY(i / 10), w, toY(i / 10));
    add(svg, "text", { x: 2, y: toY(i / 10) - 4, class: "axis" }, String(i / 10));
  }
  titles(svg, w, h, "EOTF(Gamma)");
  xLabels(svg, w, h - 4);
  series(svg, w, toY, [2.178, 2.16, 2.21, 2.214, 2.217, 2.214, 2.21, 2.2, 2.21], "#ff0");
  series(svg, w, toY, Array(9).fill(2.2), "#0ff");
  // dashed reference sits over the measured curve
  svg.querySelector("polyline:last-of-type").setAttribute("stroke", "none");
  line(svg, w * 0.095, toY(2.2), w * 0.9, toY(2.2), "guide-cyan");
}

function draw() {
  drawRgb();
  drawGamma();
}

draw();
window.addEventListener("resize", draw);
```
